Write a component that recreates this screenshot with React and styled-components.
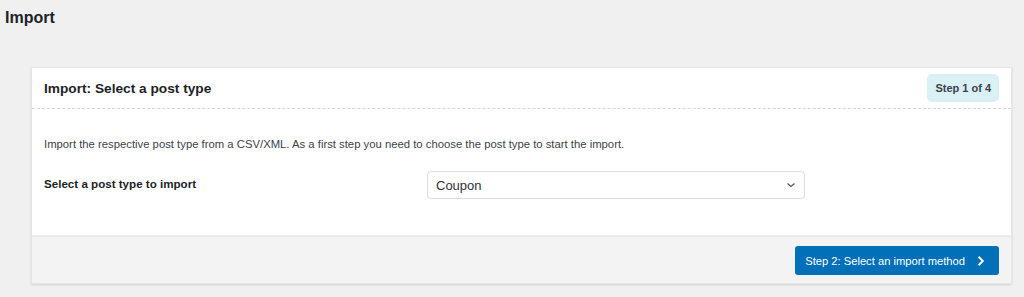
import React from 'react'
import styled, { createGlobalStyle } from 'styled-components'

const GlobalStyle = createGlobalStyle`
  html, body {
    margin: 0;
    padding: 0;
    background: #f0f0f1;
    font-family: "Liberation Sans", Arial, sans-serif;
    color: #1d2327;
  }
`

const Page = styled.div`
  padding: 8px 12px 12px 5px;
`

const PageTitle = styled.h1`
  margin: 0 0 39px;
  font-size: 16px;
  line-height: 20px;
  font-weight: 600;
  color: #1d2327;
`

const Card = styled.div`
  margin-left: 26px;
  background: #fff;
  border: 1px solid #e6e6e6;
  box-shadow: 0 1px 2px rgba(0, 0, 0, 0.12);
`

const CardHeader = styled.div`
  display: flex;
  align-items: center;
  justify-content: space-between;
  height: 40px;
  padding: 0 12px;
  border-bottom: 1px dashed #d6d6d6;
`

const CardTitle = styled.h2`
  margin: 0;
  font-size: 13.7px;
  font-weight: 600;
  color: #1d2327;
`

const Badge = styled.span`
  display: inline-flex;
  align-items: center;
  height: 28px;
  padding: 0 8px;
  border-radius: 5px;
  background: #d9f0f4;
  color: #3c434a;
  font-size: 11px;
  font-weight: 700;
`

const CardBody = styled.div`
  padding: 27px 12px 36px;
`

const Intro = styled.p`
  margin: 0 0 19px;
  font-size: 11.3px;
  line-height: 16px;
  color: #3c434a;
`

const FieldRow = styled.div`
  display: grid;
  grid-template-columns: 383px 378px;
  align-items: center;
`

const Label = styled.label`
  margin-bottom: 3px;
  font-size: 11.6px;
  font-weight: 700;
  color: #1d2327;
`

const SelectBox = styled.div`
  height: 28px;
  display: flex;
  align-items: center;
  justify-content: space-between;
  padding: 0 8px;
  border: 1px solid #dcdcde;
  border-radius: 4px;
  background: #fff;
  font-size: 13px;
  color: #2c3338;
  box-sizing: border-box;
`

const CardFooter = styled.div`
  display: flex;
  justify-content: flex-end;
  padding: 9px 12px 8px;
  background: #f3f3f3;
  border-top: 2px solid #ececec;
`

const PrimaryButton = styled.button`
  display: inline-flex;
  align-items: center;
  gap: 10px;
  height: 29px;
  padding: 0 12px 0 10px;
  border: none;
  border-radius: 3px;
  background: #0170b9;
  color: #fff;
  font-family: inherit;
  font-size: 11.2px;
  font-weight: 400;
  cursor: pointer;
`

const Chevron = ({ size = 10, color = 'currentColor', dir = 'right' }) => (
  <svg width={size} height={size} viewBox='0 0 10 10' fill='none'>
    {dir === 'right'
      ? <path d='M3 1.5 L6.5 5 L3 8.5' stroke={color} strokeWidth='1.6' />
      : <path d='M1.5 3.5 L5 6.5 L8.5 3.5' stroke={color} strokeWidth='1.2' />}
  </svg>
)

const App = () => (
  <>
    <GlobalStyle />
    <Page>
      <PageTitle>Import</PageTitle>
      <Card>
        <CardHeader>
          <CardTitle>Import: Select a post type</CardTitle>
          <Badge>Step 1 of 4</Badge>
        </CardHeader>
        <CardBody>
          <Intro>
            Import the respective post type from a CSV/XML. As a first step you need to choose the post type to start the import.
          </Intro>
          <FieldRow>
            <Label>Select a post type to import</Label>
            <SelectBox>
              <span>Coupon</span>
              <Chevron dir='down' color='#50575e' />
            </SelectBox>
          </FieldRow>
        </CardBody>
        <CardFooter>
          <PrimaryButton>
            Step 2: Select an import method
            <Chevron size={12} />
          </PrimaryButton>
        </CardFooter>
      </Card>
    </Page>
  </>
)

export default App
